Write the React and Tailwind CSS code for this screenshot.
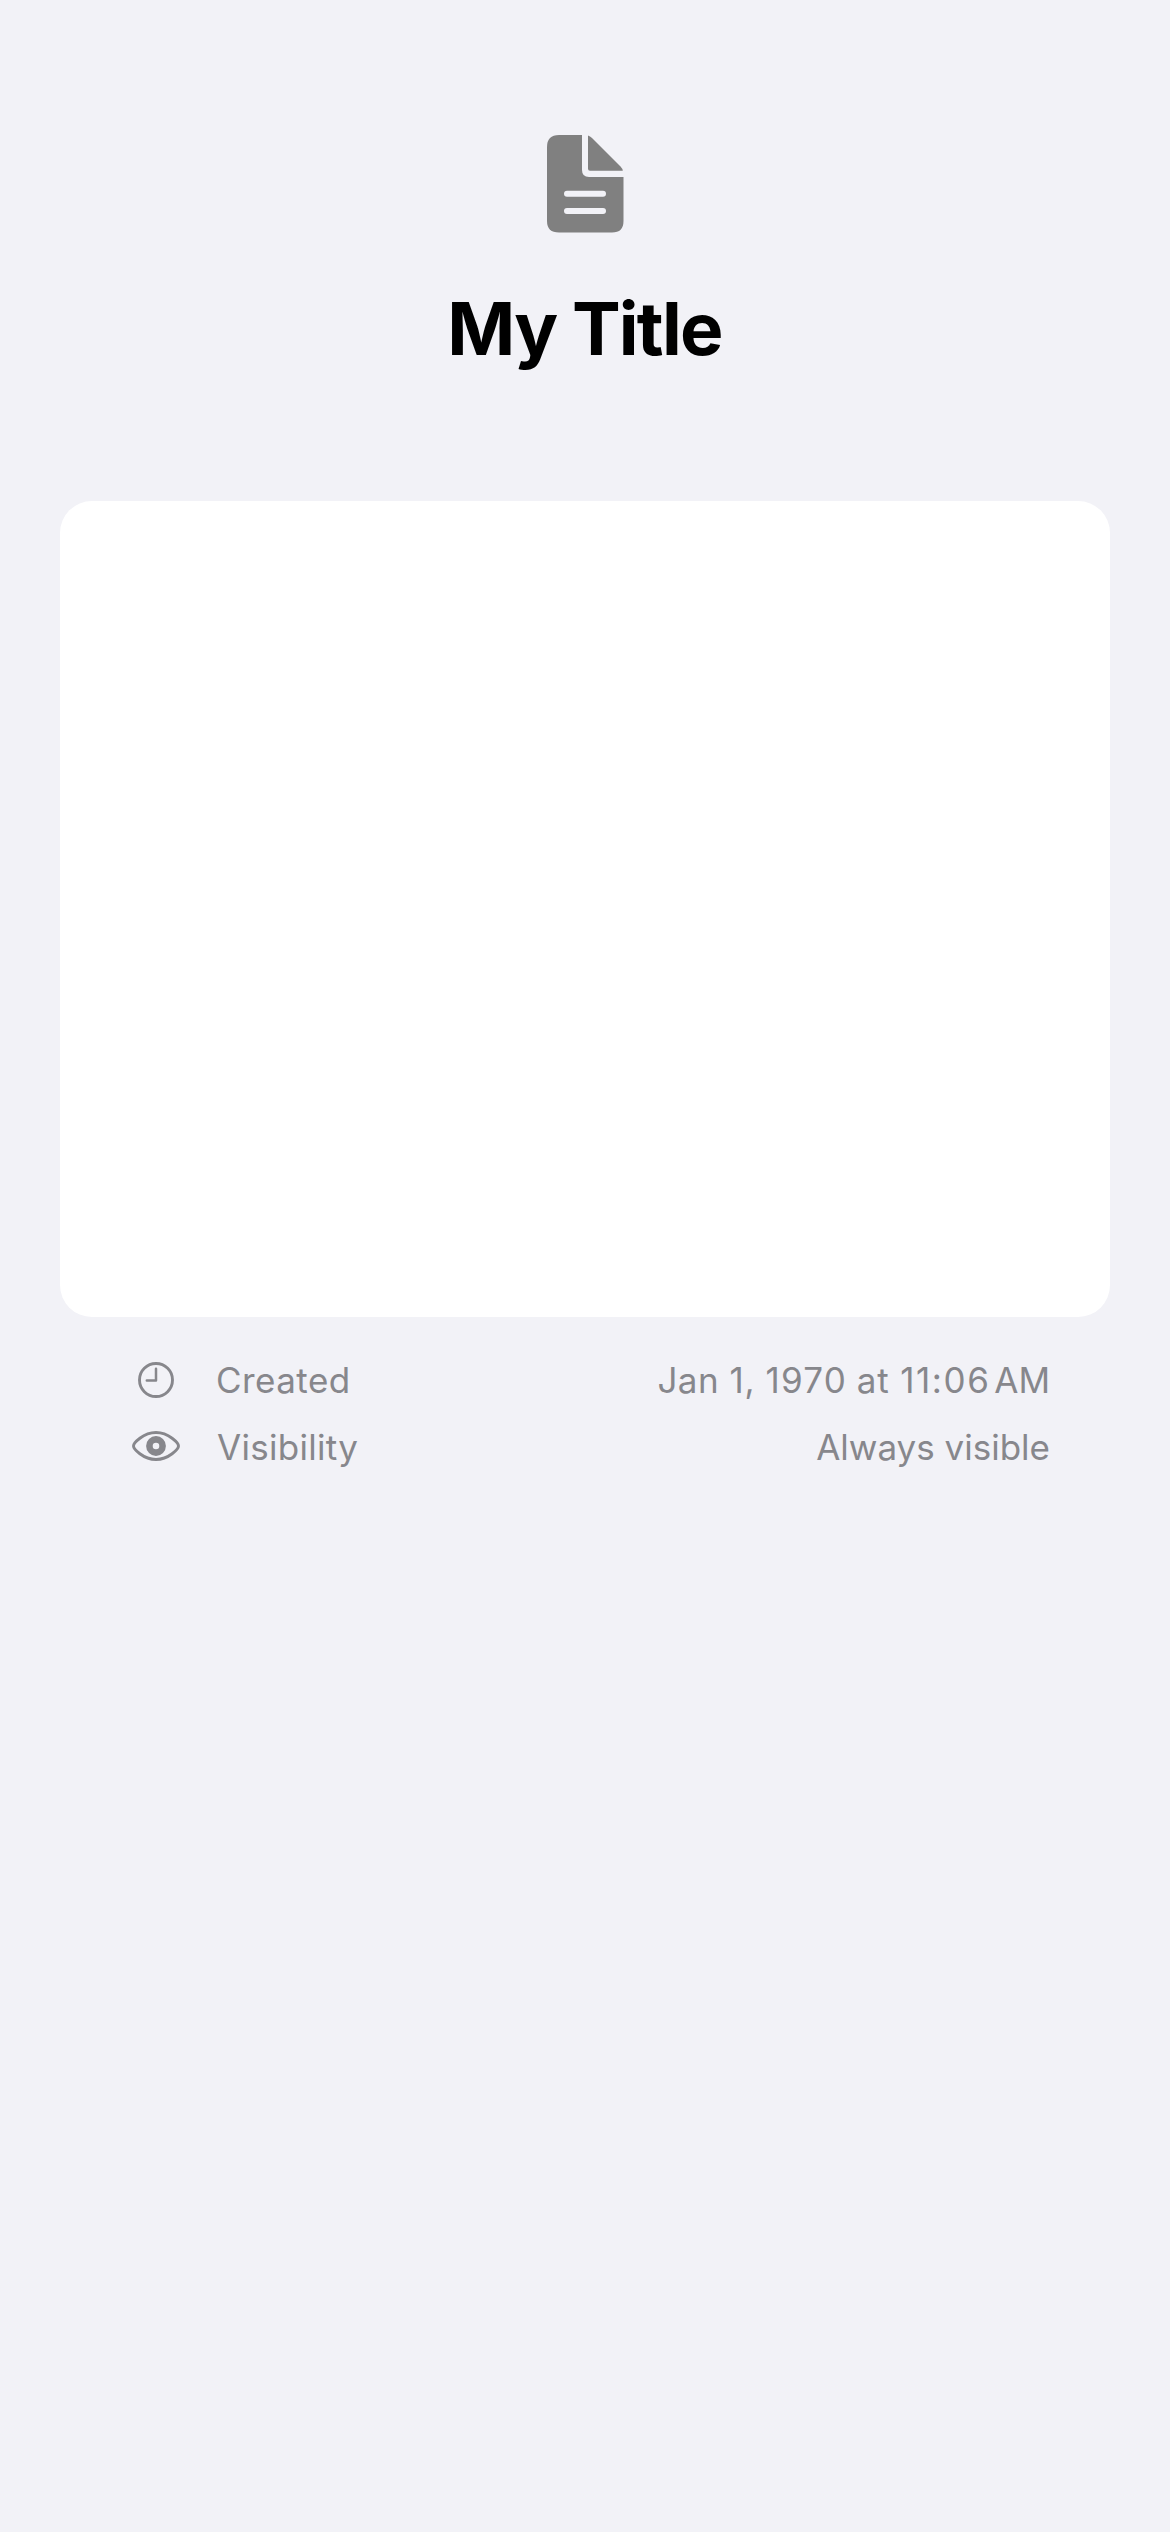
function DocIcon() {
  return (
    <svg className="h-[98px] w-[77px]" viewBox="0 0 77 98" fill="#808080">
      <path d="M12 0H35V35Q35 42 42 42H76.5V86Q76.5 97.5 65 97.5H12Q0 97.5 0 86V12Q0 0 12 0Z" />
      <path d="M41 0.4Q43 1 45 3L73.5 31.5Q75.5 33.5 75.8 35.7H43Q41 35.7 41 33.7Z" />
      <path d="M20 58.7H56M20 76H56" stroke="#f2f2f7" strokeWidth="6" strokeLinecap="round" />
    </svg>
  );
}

function ClockIcon() {
  return (
    <svg className="mb-px h-9 w-9" viewBox="0 0 36 36" fill="none" stroke="#87878c" strokeLinecap="round" strokeLinejoin="round">
      <circle cx="18" cy="18" r="16.5" strokeWidth="2.9" />
      <path d="M18 6.8V18.6H8.8" strokeWidth="2.5" />
    </svg>
  );
}

function EyeIcon() {
  return (
    <svg className="mb-[3px] h-[30px] w-12" viewBox="0 0 48 30" fill="none" stroke="#87878c">
      <path d="M1.5 15C1.5 12.3 11 1.5 24 1.5S46.5 12.3 46.5 15S37 28.5 24 28.5S1.5 17.7 1.5 15Z" strokeWidth="2.9" />
      <circle cx="24" cy="15" r="6.6" strokeWidth="6.6" />
    </svg>
  );
}

function Row({ icon, label, children }) {
  return (
    <div className="flex h-[67px] items-center whitespace-nowrap text-[35px] leading-[67px] text-[#87878c]">
      <div className="flex w-12 justify-center">{icon}</div>
      <div className="ml-9">{label}</div>
      <div className="ml-auto">{children}</div>
    </div>
  );
}

export default function App() {
  return (
    <main className="flex h-[2532px] w-[1170px] flex-col bg-[#f2f2f7] font-['Inter',sans-serif]">
      <header className="flex h-[501px] flex-col items-center pt-[135px]">
        <DocIcon />
        <h1 className="mt-[52px] pr-px text-[73px] font-bold leading-[88px] tracking-[-1.8px] text-black">My Title</h1>
      </header>
      <section className="mx-[60px] h-[816px] rounded-[32px] bg-white" />
      <div className="ml-[132px] mr-[120px] mt-[30px]">
        <Row icon={<ClockIcon />} label={<span className="tracking-[0.45px]">Created</span>}>
          <span className="tracking-[0.5px]">Jan </span>
          <span className="tracking-[0.6px]">1, </span>
          <span className="tracking-[1.2px]">1970</span>{" "}
          <span className="tracking-[0.8px]">at </span>
          <span className="tracking-[1.6px]">11:06</span>
          <span className="tracking-[-2.6px]">{"\u202f"}</span>AM
        </Row>
        <Row icon={<EyeIcon />} label={<span className="ml-px tracking-[0.3px]">Visibility</span>}>Always visible</Row>
      </div>
    </main>
  );
}
